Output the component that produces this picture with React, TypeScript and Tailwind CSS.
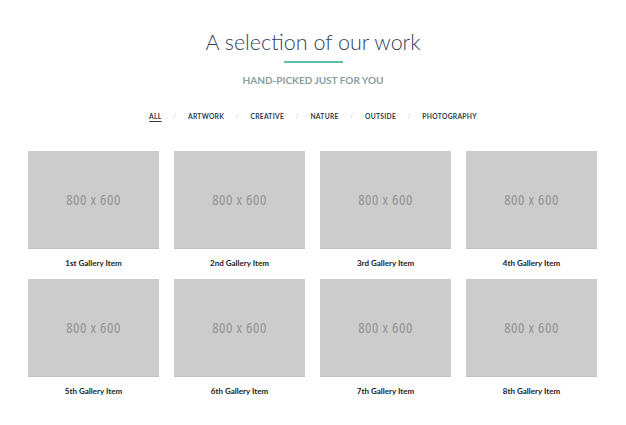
import React from "react";

const items = ["1st", "2nd", "3rd", "4th", "5th", "6th", "7th", "8th"];
const cats = ["ALL", "ARTWORK", "CREATIVE", "NATURE", "OUTSIDE", "PHOTOGRAPHY"];

export default function App() {
  return (
    <div className="w-[626px] h-[425px] bg-white overflow-hidden" style={{ fontFamily: "Lato, 'Open Sans', sans-serif" }}>
      <div className="flex flex-col items-center pt-[28px]">
        <h1 className="text-[21.5px] leading-[28px] font-light text-[#34425a]">A selection of our work</h1>
        <div className="mt-[5px] w-[59px] h-[2px] bg-[#5bbfad]" />
        <p className="mt-[11px] text-[10px] leading-[12px] font-bold text-[#88a0a0]">HAND-PICKED JUST FOR YOU</p>
        <nav className="mt-[25px] flex items-center text-[6.7px] leading-[10px] font-bold tracking-[0.3px] text-[#2c3a4e]">
          {cats.map((c, i) => (
            <React.Fragment key={c}>
              {i > 0 && <span className="mx-[11.5px] font-normal text-[#c8ccd0]">/</span>}
              <span className={i === 0 ? "underline underline-offset-2" : ""}>{c}</span>
            </React.Fragment>
          ))}
        </nav>
      </div>
      <div className="ml-[28px] mt-[30px] w-[569px] grid grid-cols-4 gap-x-[15px] gap-y-[11px]">
        {items.map((n) => (
          <div key={n} className="flex flex-col items-center">
            <div className="w-full h-[98px] bg-[#cccccc] border-b border-[#c2c2c2] flex items-center justify-center">
              <span className="text-[15px] text-[#939393] [font-stretch:75%] tracking-[0.6px]" style={{ fontFamily: "'Open Sans', sans-serif" }}>800 x 600</span>
            </div>
            <span className="mt-[9px] text-[8px] leading-[10px] font-bold text-[#222]">{n} Gallery Item</span>
          </div>
        ))}
      </div>
    </div>
  );
}
